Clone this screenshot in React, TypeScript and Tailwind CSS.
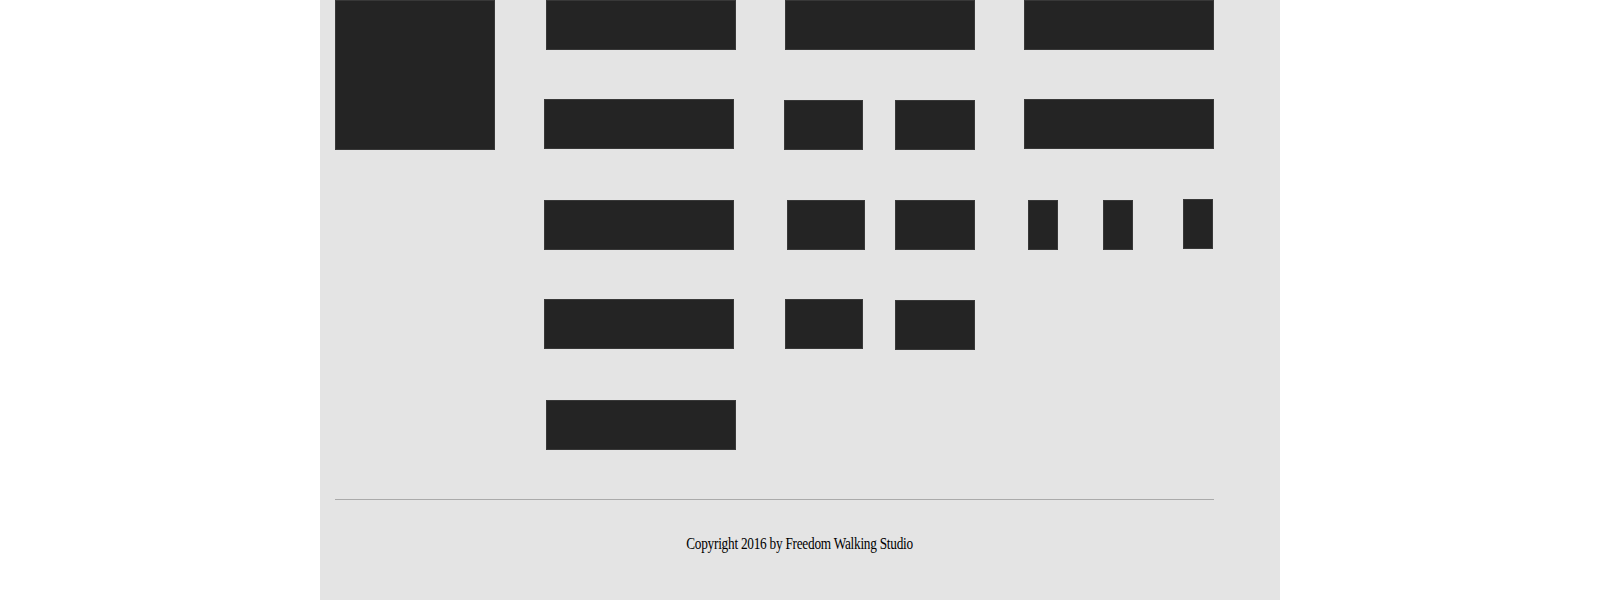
import React from "react";

const Box = ({ className = "" }: { className?: string }) => (
  <div className={`h-[50px] bg-[#242424] border border-[#383838] ${className}`} />
);

const App: React.FC = () => {
  return (
    <div className="min-h-screen bg-white">
      <div className="w-[960px] mx-auto bg-[#e4e4e4] h-[600px] overflow-hidden">
        <div className="flex pl-[15px]">
          {/* thumbnail */}
          <div className="w-[160px] h-[150px] bg-[#242424] border border-[#383838]" />

          {/* column 1 */}
          <div className="ml-[49px] w-[190px] flex flex-col gap-[50px]">
            <Box className="ml-[2px] w-[190px]" />
            <Box className="-mt-[1px]" />
            <Box className="mt-[1px]" />
            <Box className="-mt-[1px]" />
            <Box className="ml-[2px] w-[190px] mt-[1px]" />
          </div>

          {/* column 2 */}
          <div className="ml-[51px] w-[190px] flex flex-col gap-[50px]">
            <Box />
            <div className="flex justify-between">
              <Box className="w-[79px] -ml-[1px]" />
              <Box className="w-[80px]" />
            </div>
            <div className="flex justify-between">
              <Box className="w-[78px] ml-[2px]" />
              <Box className="w-[80px]" />
            </div>
            <div className="flex justify-between items-start -mt-[1px]">
              <Box className="w-[78px]" />
              <Box className="w-[80px] mt-[1px]" />
            </div>
          </div>

          {/* column 3 */}
          <div className="ml-[49px] w-[190px] flex flex-col gap-[50px]">
            <Box />
            <Box className="-mt-[1px]" />
            <div className="flex items-start mt-[1px] pl-[4px]">
              <Box className="w-[30px]" />
              <Box className="w-[30px] ml-[45px]" />
              <Box className="w-[30px] ml-[50px] -mt-[1px]" />
            </div>
          </div>
        </div>

        <div className="mt-[49px] ml-[15px] w-[879px] border-t border-[#aaaaaa]" />

        <div className="pt-[31px] text-center">
          <span
            className="inline-block scale-x-[0.83] text-[16px] text-black tracking-[-0.3px]"
            style={{ fontFamily: '"Liberation Serif", serif' }}
          >
            Copyright 2016 by Freedom Walking Studio
          </span>
        </div>
      </div>
    </div>
  );
};

export default App;
